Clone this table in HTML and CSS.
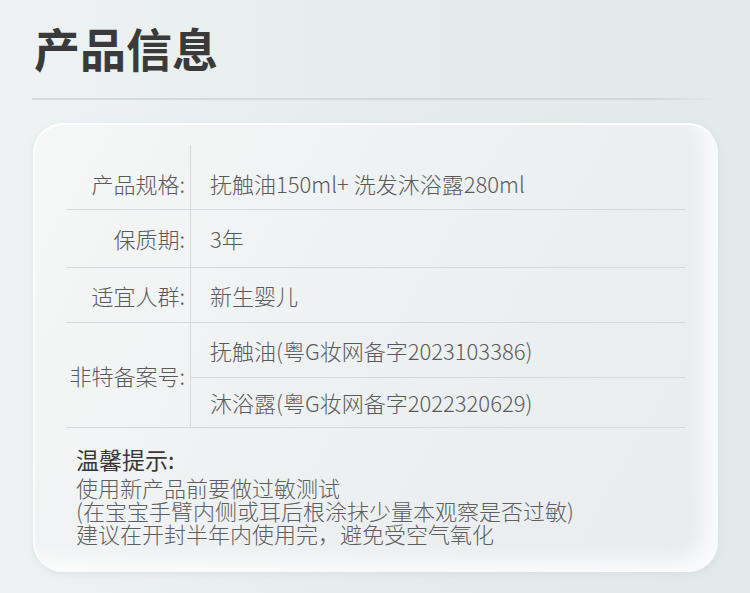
FILE: index.html
```html
<!DOCTYPE html>
<html lang="zh-CN">
<head>
<meta charset="utf-8">
<title>产品信息</title>
<link rel="stylesheet" href="styles.css">
</head>
<body>
<div class="page">
  <h1 class="title">产品信息</h1>
  <div class="rule"></div>
  <div class="card">
    <table class="spec">
      <tr class="first">
        <th>产品规格:</th>
        <td>抚触油150ml+ 洗发沐浴露280ml</td>
      </tr>
      <tr class="r2">
        <th>保质期:</th>
        <td>3年</td>
      </tr>
      <tr class="r3">
        <th>适宜人群:</th>
        <td>新生婴儿</td>
      </tr>
      <tr class="r4">
        <th rowspan="2">非特备案号:</th>
        <td>抚触油(粤G妆网备字2023103386)</td>
      </tr>
      <tr class="r5">
        <td>沐浴露(粤G妆网备字2022320629)</td>
      </tr>
    </table>
    <div class="tips">
      <h2 class="tips-title">温馨提示:</h2>
      <p>使用新产品前要做过敏测试</p>
      <p>(在宝宝手臂内侧或耳后根涂抹少量本观察是否过敏)</p>
      <p>建议在开封半年内使用完，避免受空气氧化</p>
    </div>
  </div>
</div>
</body>
</html>
```

FILE: styles.css
```css
html, body {
  margin: 0;
  padding: 0;
}
body {
  width: 750px;
  height: 593px;
  overflow: hidden;
  background: linear-gradient(90deg, #eef2f3 0%, #e6eced 50%, #e1e9ea 100%);
  font-family: "Noto Sans CJK SC", "Noto Sans", sans-serif;
  color: #555;
}
.page {
  display: flex;
  flex-direction: column;
  padding: 22px 0 0 0;
}
.title {
  margin: 0 0 0 34px;
  font-size: 46px;
  line-height: 50px;
  font-weight: 700;
  color: #3a3a3a;
  letter-spacing: 0;
}
.rule {
  margin: 26px 30px 0 32px;
  height: 2px;
  background: linear-gradient(90deg, #d6dcde 0%, #d0d8da 90%, rgba(208,216,218,0) 100%);
}
.card {
  margin: 23px 0 0 33px;
  width: 685px;
  height: 449px;
  box-sizing: border-box;
  border-radius: 30px;
  border-top: 2px solid #ffffff;
  border-left: 2px solid #fbfcfc;
  background: linear-gradient(120deg, #f6f7f7 0%, #eef1f2 45%, #e7ecee 100%);
  box-shadow: inset -14px -12px 18px rgba(255,255,255,0.75), 0 2px 6px rgba(180,192,195,0.25);
  padding: 20px 31px 0 31px;
  display: flex;
  flex-direction: column;
}
.spec {
  width: 619px;
  border-collapse: collapse;
  font-size: 22px;
  font-weight: 300;
  color: #5a5a5a;
}
.spec th {
  width: 119px;
  padding: 0 5px 0 0;
  text-align: right;
  font-weight: 300;
  border-right: 1px solid #d4dadc;
  white-space: nowrap;
}
.spec td {
  padding: 0 0 0 19px;
  text-align: left;
  white-space: nowrap;
}
.spec tr {
  border-bottom: 1px solid #d4dadc;
}
.spec .first th, .spec .first td {
  height: 64px;
  padding-top: 12px;
  box-sizing: border-box;
}
.spec .r2 th, .spec .r2 td { height: 57px; }
.spec .r3 th, .spec .r3 td { height: 54px; }
.spec .r4 td { height: 54px; }
.spec .r5 td { height: 49px; }
.tips {
  padding: 16px 0 0 10px;
}
.tips-title {
  margin: 0 0 2px 0;
  font-size: 23px;
  line-height: 30px;
  font-weight: 400;
  color: #383838;
}
.tips p {
  margin: 0;
  font-size: 22px;
  line-height: 23px;
  font-weight: 300;
  color: #5e5e5e;
  white-space: nowrap;
}
```
